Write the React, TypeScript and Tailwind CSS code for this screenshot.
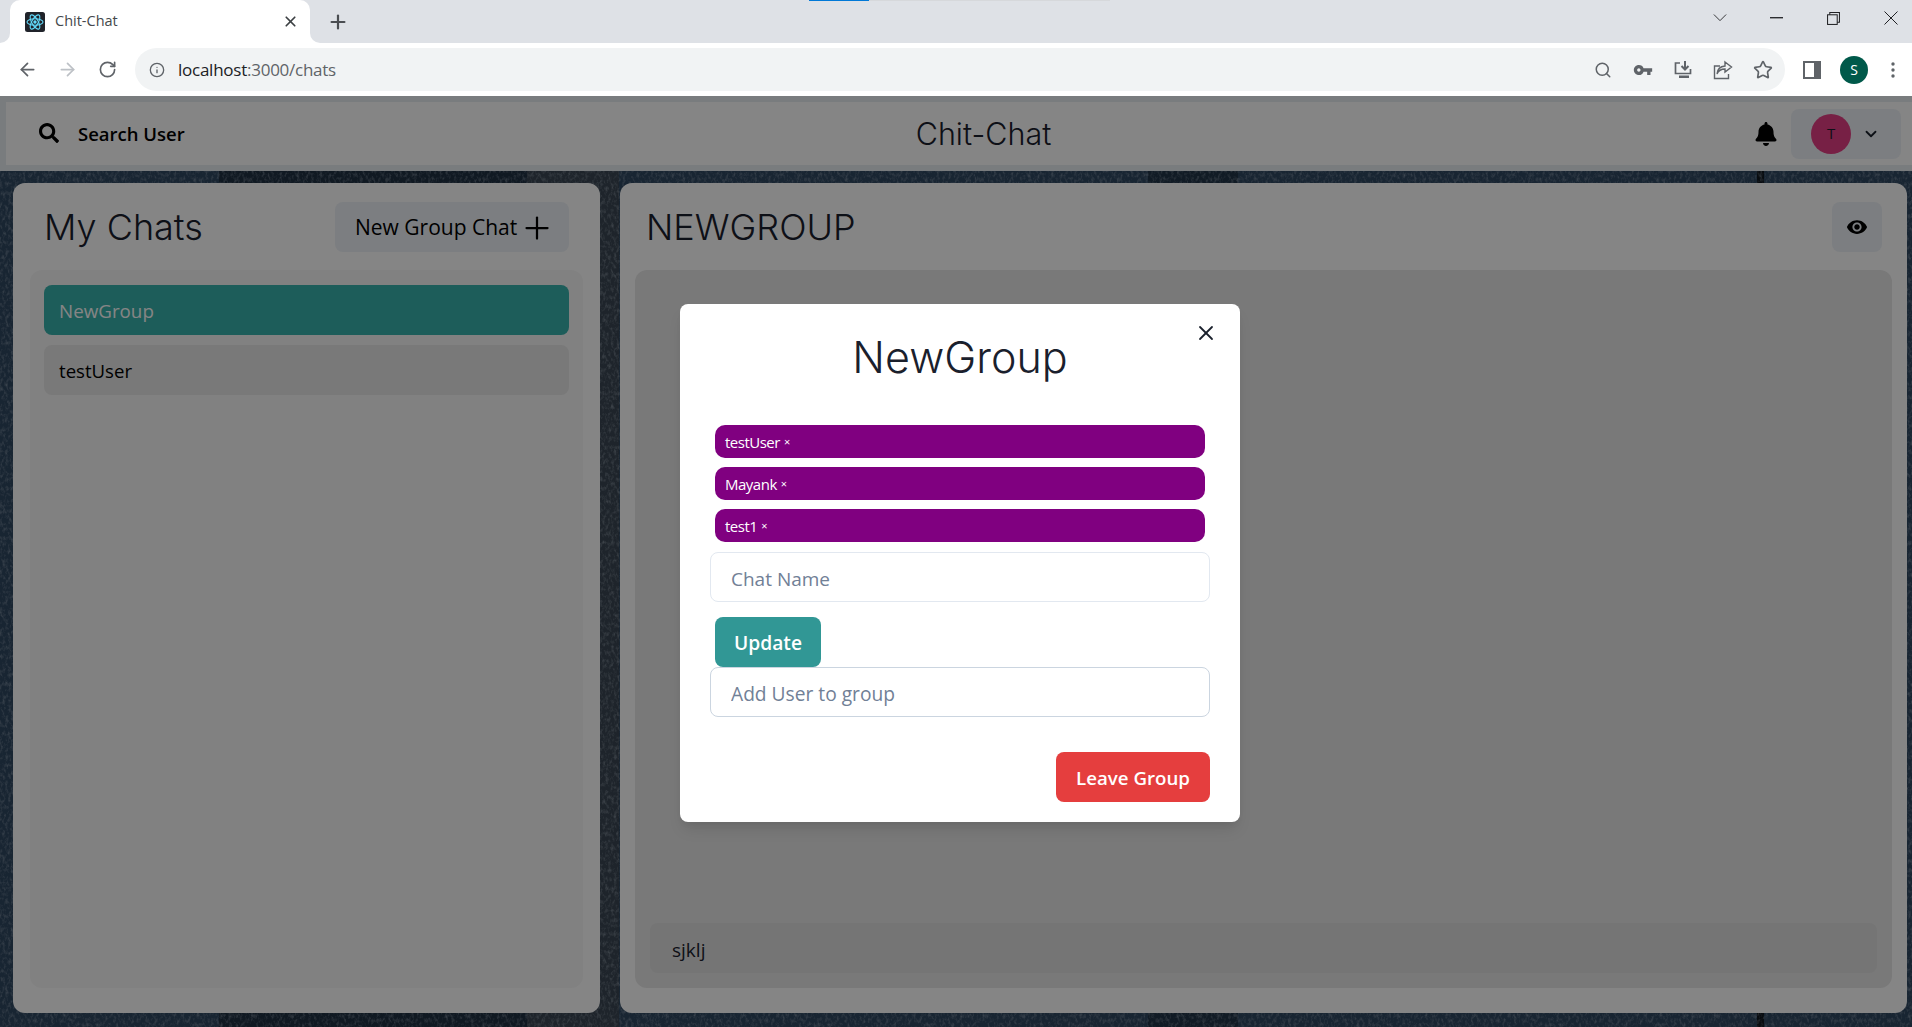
import React from "react";
import { ArrowLeft, ArrowRight, RotateCw, Info, Search, Star, Plus, X, ChevronDown } from "lucide-react";
import { FaSearch, FaBell } from "react-icons/fa";
import { MdVisibility, MdVpnKey } from "react-icons/md";

function Favicon() {
  return (
    <svg viewBox="0 0 20 20" className="h-5 w-5 shrink-0">
      <rect width="20" height="20" rx="2.5" fill="#20232a" />
      <g fill="none" stroke="#61dafb" strokeWidth="1.1">
        <ellipse cx="10" cy="10" rx="8" ry="3.2" />
        <ellipse cx="10" cy="10" rx="8" ry="3.2" transform="rotate(60 10 10)" />
        <ellipse cx="10" cy="10" rx="8" ry="3.2" transform="rotate(120 10 10)" />
      </g>
      <circle cx="10" cy="10" r="1.7" fill="#61dafb" />
    </svg>
  );
}

function TabStrip() {
  return (
    <div className="relative flex h-[43px] shrink-0 items-stretch bg-[#dee1e6]">
      <div className="absolute left-[809px] top-0 h-px w-[60px] bg-[#0078d7]" />
      <div className="absolute left-[869px] top-0 h-px w-[241px] bg-[#d6d8db]" />
      <div className="relative ml-[10px] flex w-[300px] items-center rounded-t-[10px] bg-white pl-[15px] pr-[11px]">
        <div className="absolute -left-[10px] bottom-0 h-[10px] w-[10px] bg-white">
          <div className="h-full w-full rounded-br-[10px] bg-[#dee1e6]" />
        </div>
        <div className="absolute -right-[10px] bottom-0 h-[10px] w-[10px] bg-white">
          <div className="h-full w-full rounded-bl-[10px] bg-[#dee1e6]" />
        </div>
        <Favicon />
        <span className="ml-[10px] flex-1 pb-px text-[14.5px] text-[#45484c]">Chit-Chat</span>
        <X size={17} strokeWidth={2.4} className="text-[#3c4043]" />
      </div>
      <div className="ml-[17px] flex items-center">
        <Plus size={22} strokeWidth={2.4} className="text-[#4a4d51]" />
      </div>
      <div className="ml-auto flex items-center pb-[7px] text-[#202124]">
        <svg viewBox="0 0 16 10" className="mr-[43px] h-[10px] w-[14px]" fill="none" stroke="currentColor" strokeWidth="1">
          <path d="M1 1l7 7 7-7" />
        </svg>
        <svg viewBox="0 0 14 2" className="mr-[44px] h-[2px] w-[13px]">
          <rect width="14" height="1.4" fill="currentColor" />
        </svg>
        <svg viewBox="0 0 14 14" className="mr-[44px] h-[13px] w-[13px]" fill="none" stroke="currentColor" strokeWidth="1.1">
          <rect x="0.6" y="3" width="10.4" height="10.4" />
          <path d="M3 3V0.6h10.4V11H11" />
        </svg>
        <svg viewBox="0 0 14 14" className="mr-[14px] h-[14px] w-[14px]" fill="none" stroke="currentColor" strokeWidth="1">
          <path d="M0.5 0.5l13 13M13.5 0.5l-13 13" />
        </svg>
      </div>
    </div>
  );
}

function Toolbar() {
  return (
    <div className="flex h-[53px] shrink-0 items-start bg-white pt-[5px]">
      <div className="flex h-[43px] w-[135px] items-center text-[#5f6368]">
        <ArrowLeft size={21} strokeWidth={2} className="ml-[17px]" />
        <ArrowRight size={21} strokeWidth={2} className="ml-[19px] text-[#bdc1c6]" />
        <RotateCw size={19} strokeWidth={2.1} className="ml-[20px]" />
      </div>
      <div className="flex h-[43px] w-[1650px] items-center rounded-full bg-[#f1f3f4] text-[#5f6368]">
        <Info size={16} strokeWidth={2} className="ml-[14px]" />
        <span className="ml-[13px] text-[17px] tracking-[-0.25px] text-[#5f6368]">
          <span className="text-[#202124]">localhost</span>:3000/chats
        </span>
        <div className="ml-auto flex items-center pr-[12px]">
          <Search size={18} strokeWidth={2} />
          <MdVpnKey size={20} className="ml-[21px]" />
          <svg viewBox="0 0 20 20" className="ml-[20px] h-5 w-5" fill="none" stroke="currentColor" strokeWidth="1.7">
            <path d="M7 3H2.5v10.5h15V9" />
            <path d="M12 1v8M8.5 6l3.5 3.5L15.500 6" strokeWidth="2" />
            <rect x="6" y="15.500" width="10" height="2.500" fill="currentColor" stroke="none" />
          </svg>
          <svg viewBox="0 0 20 20" className="ml-[20px] h-5 w-5" fill="none" stroke="currentColor" strokeWidth="1.4">
            <path d="M7 6H1.500v12.500h14V14" />
            <path d="M12 2l6.500 5-6.500 5V9C8 9 5.500 10.500 4 14c.3-4.500 3-7.500 8-8z" />
          </svg>
          <Star size={20} strokeWidth={2} className="ml-[20px]" />
        </div>
      </div>
      <div className="flex h-[43px] flex-1 items-center text-[#5f6368]">
        <svg viewBox="0 0 18 18" className="ml-[18px] h-[18px] w-[18px]">
          <path fill="currentColor" fillRule="evenodd" d="M0 0h18v18H0zM2 2v14h9V2z" />
        </svg>
        <div className="ml-[19px] flex h-7 w-7 items-center justify-center rounded-full bg-[#00594a] text-[14px] text-white">S</div>
        <svg viewBox="0 0 4 16" className="ml-[23px] h-4 w-1" fill="currentColor">
          <circle cx="2" cy="2" r="1.700" />
          <circle cx="2" cy="8" r="1.700" />
          <circle cx="2" cy="14" r="1.700" />
        </svg>
      </div>
    </div>
  );
}

function Wood() {
  return (
    <svg className="absolute inset-0 h-full w-full" preserveAspectRatio="none">
      <defs>
        <filter id="grain" x="0" y="0" width="100%" height="100%">
          <feTurbulence type="fractalNoise" baseFrequency="0.35 0.22" numOctaves="3" seed="7" />
          <feColorMatrix values="0 0 0 0 0.55  0 0 0 0 0.62  0 0 0 0 0.7  0.9 0 0 0 -0.4" />
        </filter>
      </defs>
      <rect width="100%" height="100%" fill="#2f4760" />
      <rect x="219" width="308" height="100%" fill="#1f3042" />
      <rect x="527" width="92" height="100%" fill="#3a4653" />
      <rect x="1148" width="90" height="100%" fill="#223548" />
      <rect x="1757" width="7" height="100%" fill="#101820" />
      <rect width="100%" height="100%" filter="url(#grain)" />
    </svg>
  );
}

function Header() {
  return (
    <header className="relative flex h-[75px] shrink-0 items-center border-y-[6px] border-l-[6px] border-[#e9edf1] bg-white">
      <div className="flex flex-1 items-center pl-[33px]">
        <FaSearch size={20} className="mb-[2px] text-black" />
        <span className="ml-[19px] text-[18.5px] font-semibold text-black">Search User</span>
      </div>
      <div className="flex flex-1 justify-center pl-[27px]">
        <span className="font-['Inter'] text-[30.5px] font-light text-[#1a202c]">Chit-Chat</span>
      </div>
      <div className="flex flex-1 items-center justify-end pr-[11px]">
        <FaBell size={24} className="mr-[13px] text-black" />
        <div className="flex h-[50px] w-[110px] items-center rounded-lg bg-[#edf2f7] pl-5">
          <div className="flex h-10 w-10 items-center justify-center rounded-full bg-[#e53e84] text-[15px] text-[#1a202c]">T</div>
          <ChevronDown size={18} strokeWidth={2.4} className="ml-[11px] text-[#1a202c]" />
        </div>
      </div>
    </header>
  );
}

function MyChats() {
  return (
    <section className="flex w-[587px] flex-col rounded-[12px] bg-white">
      <div className="flex h-[87px] items-end pb-[18px] pl-[31px] pr-[31px]">
        <h2 className="mb-[2px] font-['Inter'] text-[36px] font-light leading-[46px] text-[#1a202c]">My Chats</h2>
        <button className="ml-auto flex h-[50px] w-[234px] items-center rounded-lg bg-[#edf2f7] pl-[20px] pt-[2px] text-[21px] text-black">
          New Group Chat
          <Plus size={36} strokeWidth={1.5} className="-my-2 ml-[2px] text-black" />
        </button>
      </div>
      <div className="mx-[17px] mb-[25px] flex flex-1 flex-col gap-[10px] rounded-[12px] bg-[#f8f8f8] px-[14px] py-[15px]">
        <div className="flex h-[50px] items-center rounded-lg bg-[#38b2ac] px-[15px] pt-[2px] text-[18.8px] text-white">NewGroup</div>
        <div className="flex h-[50px] items-center rounded-lg bg-[#e8e8e8] px-[15px] pt-[2px] text-[18.6px] text-black">testUser</div>
      </div>
    </section>
  );
}

function ChatBox() {
  return (
    <section className="flex flex-1 flex-col rounded-[12px] bg-white">
      <div className="flex h-[87px] items-end justify-between pb-[18px] pl-[26px] pr-[25px]">
        <h2 className="mb-[2px] font-['Inter'] text-[36px] font-light leading-[46px] text-[#1a202c]">NEWGROUP</h2>
        <button className="flex h-[50px] w-[50px] items-center justify-center rounded-lg bg-[#edf2f7] text-black">
          <MdVisibility size={22} />
        </button>
      </div>
      <div className="mx-[15px] mb-[25px] flex flex-1 flex-col justify-end rounded-[12px] bg-[#e8e8e8] px-[15px] pb-[15px]">
        <input
          defaultValue="sjklj"
          readOnly
          className="h-[50px] w-full rounded-lg bg-[#e0e0e0] px-[22px] pt-[4px] text-[19px] text-[#1a202c] outline-none"
        />
      </div>
    </section>
  );
}

function Chip({ name }: { name: string }) {
  return (
    <div className="mx-[5px] flex h-[33px] items-center rounded-[10px] bg-[#800080] px-[10px] pt-px text-[15px] font-medium tracking-[-0.5px] text-white">
      {name}
      <span className="ml-[4px] text-[11px] font-normal">×</span>
    </div>
  );
}

function Modal() {
  return (
    <div className="absolute inset-0 flex justify-center bg-black/48 pl-[8px] pt-[208px]">
      <div className="relative h-[518px] w-[560px] rounded-lg bg-white px-[30px] shadow-[0_10px_15px_-3px_rgba(0,0,0,0.1),0_4px_6px_-2px_rgba(0,0,0,0.05)]">
        <X size={24} strokeWidth={1.8} className="absolute right-[22px] top-[17px] text-[#1a202c]" />
        <div className="flex h-[106px] items-center justify-center">
          <h3 className="font-['Inter'] text-[43px] font-light text-[#1a202c]">NewGroup</h3>
        </div>
        <div className="mt-[15px] flex flex-col gap-[9px]">
          <Chip name="testUser" />
          <Chip name="Mayank" />
          <Chip name="test1" />
        </div>
        <input
          placeholder="Chat Name"
          className="mt-[10px] h-[50px] w-full rounded-lg border border-[#e2e8f0] px-[20px] pt-[3px] text-[19px] placeholder:text-[#718096] outline-none"
        />
        <button className="ml-[5px] mt-[15px] block h-[50px] w-[106px] rounded-lg bg-[#319795] pt-[2px] text-[19.2px] font-semibold text-white">Update</button>
        <input
          placeholder="Add User to group"
          className="h-[50px] w-full rounded-lg border border-[#cbd5e0] px-[20px] pt-[2px] text-[19.2px] placeholder:text-[#718096] outline-none"
        />
        <div className="mt-[35px] flex justify-end">
          <button className="h-[50px] w-[154px] rounded-lg bg-[#e53e3e] pt-[2px] text-[18.7px] font-semibold text-white">Leave Group</button>
        </div>
      </div>
    </div>
  );
}

export default function App() {
  return (
    <div className="flex h-screen w-full flex-col overflow-hidden font-['Open_Sans',sans-serif]">
      <TabStrip />
      <Toolbar />
      <div className="relative flex flex-1 flex-col">
        <Wood />
        <Header />
        <main className="relative flex flex-1 gap-5 pb-[14px] pl-[13px] pr-[5px] pt-3">
          <MyChats />
          <ChatBox />
        </main>
        <Modal />
      </div>
    </div>
  );
}
